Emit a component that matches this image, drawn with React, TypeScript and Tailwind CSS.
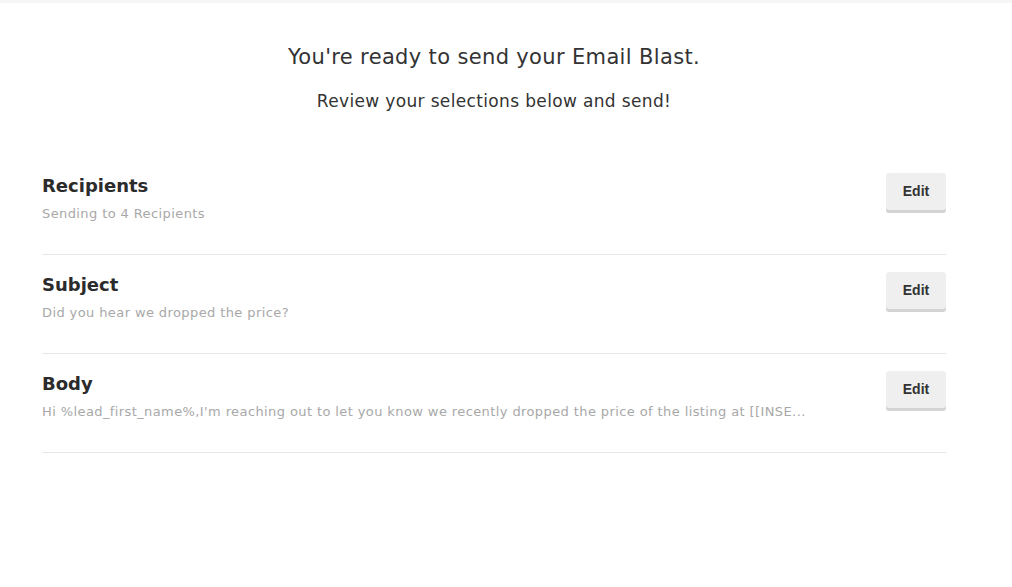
const font = { fontFamily: '"DejaVu Sans", "Noto Sans", sans-serif' };

const rows = [
  { title: 'Recipients', detail: 'Sending to 4 Recipients' },
  { title: 'Subject', detail: 'Did you hear we dropped the price?' },
  {
    title: 'Body',
    detail:
      "Hi %lead_first_name%,I'm reaching out to let you know we recently dropped the price of the listing at [[INSE...",
  },
];

export default function App() {
  return (
    <div className="min-h-[587px] bg-white text-[#333]" style={font}>
      <div className="h-[3px] bg-[#f6f6f6]" />
      <div className="mx-[42px] w-[904px]">
        <div className="pt-[40px] text-center">
          <h1 className="text-[21px] leading-[28px] tracking-[0.35px]">You're ready to send your Email Blast.</h1>
          <p className="mt-[19px] text-[17px] leading-[22px] tracking-[0.35px]">Review your selections below and send!</p>
        </div>
        <div className="mt-[44px]">
          {rows.map((row) => (
            <div key={row.title} className="flex justify-between border-b border-[#e6e6e6] pb-[31px] pt-[18px]">
              <div>
                <h2 className="text-[18px] font-semibold leading-[24px] text-[#2b2b2b]">{row.title}</h2>
                <p className="mt-[7px] text-[13px] leading-[18px] tracking-[0.4px] text-[#a8a8a8]">{row.detail}</p>
              </div>
              <button className="mt-[-1px] h-[37px] w-[60px] rounded-[3px] bg-[#efefef] text-[14px] font-bold text-[#333] shadow-[0_3px_0_#d4d4d4]" style={{ fontFamily: '"Liberation Sans", Arial, sans-serif' }}>
                Edit
              </button>
            </div>
          ))}
        </div>
      </div>
    </div>
  );
}
